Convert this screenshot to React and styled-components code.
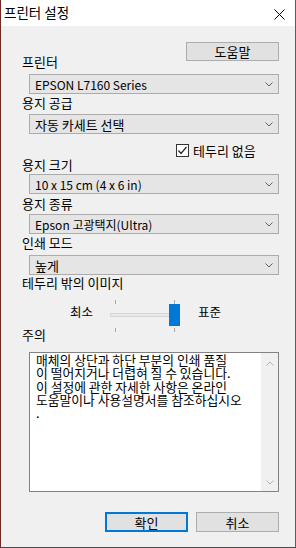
import React from "react";
import styled, { createGlobalStyle } from "styled-components";

const GlobalStyle = createGlobalStyle`
  html, body {
    margin: 0;
    padding: 0;
    background: #f0f0f0;
  }
  body {
    font-family: "Noto Sans CJK KR", "Noto Sans", sans-serif;
    font-size: 13px;
    color: #000;
  }
`;

const noteLines = [
  "매체의 상단과 하단 부분의 인쇄 품질",
  "이 떨어지거나 더렵혀 질 수 있습니다.",
  "이 설정에 관한 자세한 사항은 온라인",
  "도움말이나 사용설명서를 참조하십시오",
  ".",
];

function Chevron({ up }) {
  return (
    <svg width="8" height="5" viewBox="0 0 8 5">
      <polyline
        points={up ? "0.5,4.5 4,1 7.5,4.5" : "0.5,0.5 4,4 7.5,0.5"}
        fill="none"
        stroke="currentColor"
        strokeWidth="1"
      />
    </svg>
  );
}

function Select({ top, ko, children }) {
  return (
    <ComboStyled $top={top} $ko={ko}>
      <span>{children}</span>
      <Chevron />
    </ComboStyled>
  );
}

function App() {
  return (
    <>
      <GlobalStyle />
      <WindowStyled>
        <TitleBarStyled>
          <TitleStyled>프린터 설정</TitleStyled>
          <CloseStyled>
            <svg width="11" height="11" viewBox="0 0 11 11">
              <path d="M0.5 0.5 L10.5 10.5 M10.5 0.5 L0.5 10.5" stroke="#000" strokeWidth="1" />
            </svg>
          </CloseStyled>
        </TitleBarStyled>

        <BodyStyled>
          <TopRowStyled>
            <LabelStyled $top={13}>프린터</LabelStyled>
            <ButtonStyled $w={93} $h={19}>도움말</ButtonStyled>
          </TopRowStyled>
          <Select top={5}>EPSON L7160 Series</Select>

          <LabelStyled $top={2}>용지 공급</LabelStyled>
          <Select top={4} ko>자동 카세트 선택</Select>

          <CheckRowStyled>
            <CheckBoxStyled>
              <svg width="11" height="11" viewBox="0 0 11 11">
                <polyline points="1.5,5.5 4,8.5 9.5,2" fill="none" stroke="#222" strokeWidth="1.2" />
              </svg>
            </CheckBoxStyled>
            <span>테두리 없음</span>
          </CheckRowStyled>

          <LabelStyled $top={1}>용지 크기</LabelStyled>
          <Select top={2}>10 x 15 cm (4 x 6 in)</Select>

          <LabelStyled $top={3}>용지 종류</LabelStyled>
          <Select top={3}>Epson 고광택지(Ultra)</Select>

          <LabelStyled $top={2}>인쇄 모드</LabelStyled>
          <Select top={5} ko>높게</Select>

          <LabelStyled $top={1}>테두리 밖의 이미지</LabelStyled>
          <SliderRowStyled>
            <SliderTextStyled>최소</SliderTextStyled>
            <SliderStyled>
              <TickStyled $left={5} $top={1} />
              <TickStyled $left={64} $top={1} />
              <TrackStyled />
              <ThumbStyled />
              <TickStyled $left={5} $top={29} />
              <TickStyled $left={64} $top={29} />
            </SliderStyled>
            <SliderTextStyled>표준</SliderTextStyled>
          </SliderRowStyled>

          <LabelStyled $top={0}>주의</LabelStyled>
          <NoteStyled>
            <NoteTextStyled>
              {noteLines.map((line) => (
                <NoteLineStyled key={line}>{line}</NoteLineStyled>
              ))}
            </NoteTextStyled>
            <ScrollBarStyled>
              <Chevron up />
              <Chevron />
            </ScrollBarStyled>
          </NoteStyled>

          <FooterStyled>
            <ButtonStyled $w={83} $h={20} $primary>확인</ButtonStyled>
            <ButtonStyled $w={83} $h={20}>취소</ButtonStyled>
          </FooterStyled>
        </BodyStyled>
      </WindowStyled>
    </>
  );
}

const WindowStyled = styled.div`
  width: 296px;
  height: 548px;
  box-sizing: border-box;
  display: flex;
  flex-direction: column;
  background: #f0f0f0;
  border-left: 1px solid #6e2b25;
  border-right: 1px solid #5c5c5c;
  border-bottom: 1px solid #4a4a4a;
`;

const TitleBarStyled = styled.div`
  height: 26px;
  flex: none;
  background: #fff;
  display: flex;
  align-items: center;
  justify-content: space-between;
  padding: 0 10px 0 3px;
`;

const TitleStyled = styled.span`
  font-size: 13.5px;
  line-height: 14px;
  margin-top: -2px;
`;

const CloseStyled = styled.span`
  display: flex;
  margin-top: 3px;
`;

const BodyStyled = styled.div`
  flex: 1;
  display: flex;
  flex-direction: column;
  padding: 16px 16px 0 21px;
`;

const TopRowStyled = styled.div`
  display: flex;
  justify-content: space-between;
  align-items: flex-start;
`;

const LabelStyled = styled.div`
  margin-top: ${(p) => p.$top}px;
  height: 14px;
  line-height: 14px;
  font-size: 13px;
  white-space: nowrap;
`;

const ComboStyled = styled.div`
  margin-top: ${(p) => p.$top}px;
  margin-left: 7px;
  height: 20px;
  box-sizing: border-box;
  display: flex;
  align-items: center;
  justify-content: space-between;
  padding: 0 5px 0 5px;
  background: #e5e5e5;
  border: 1px solid #acacac;
  color: #000;
  font-size: ${(p) => (p.$ko ? 13 : 12)}px;
  white-space: nowrap;

  svg {
    color: #606060;
  }
`;

const ButtonStyled = styled.div`
  width: ${(p) => p.$w}px;
  height: ${(p) => p.$h}px;
  box-sizing: border-box;
  display: flex;
  align-items: center;
  justify-content: center;
  background: #e1e1e1;
  border: ${(p) => (p.$primary ? "2px solid #0078d7" : "1px solid #adadad")};
  font-size: 13px;
`;

const CheckRowStyled = styled.div`
  margin-top: 9px;
  margin-left: 154px;
  height: 14px;
  display: flex;
  align-items: center;
  gap: 4px;
  font-size: 13px;
`;

const CheckBoxStyled = styled.span`
  width: 13px;
  height: 13px;
  box-sizing: border-box;
  border: 1px solid #333;
  background: #fff;
  display: flex;
  align-items: center;
  justify-content: center;
`;

const SliderRowStyled = styled.div`
  margin-top: 9px;
  height: 29px;
  display: flex;
  align-items: flex-start;
  padding-left: 48px;
`;

const SliderTextStyled = styled.span`
  margin-top: 6px;
  line-height: 14px;
  font-size: 12.5px;
`;

const SliderStyled = styled.div`
  position: relative;
  width: 70px;
  height: 29px;
  margin: 0 18px 0 17px;
`;

const TrackStyled = styled.div`
  position: absolute;
  left: 0;
  top: 14px;
  width: 70px;
  height: 4px;
  box-sizing: border-box;
  background: #e7eaea;
  border: 1px solid #d6d6d6;
`;

const ThumbStyled = styled.div`
  position: absolute;
  left: 59px;
  top: 5px;
  width: 11px;
  height: 22px;
  background: #0078d7;
`;

const TickStyled = styled.div`
  position: absolute;
  left: ${(p) => p.$left}px;
  top: ${(p) => p.$top}px;
  width: 1px;
  height: 4px;
  background: #a8a8a8;
`;

const NoteStyled = styled.div`
  margin-top: 10px;
  margin-left: 7px;
  height: 140px;
  box-sizing: border-box;
  border: 1px solid #828282;
  background: #fff;
  display: flex;
`;

const NoteTextStyled = styled.div`
  flex: 1;
  padding: 0 0 0 6px;
  font-size: 12.8px;
  white-space: nowrap;
  overflow: hidden;
`;

const NoteLineStyled = styled.div`
  height: 13.25px;
  line-height: 13.25px;
`;

const ScrollBarStyled = styled.div`
  width: 17px;
  background: #f0f0f0;
  display: flex;
  flex-direction: column;
  justify-content: space-between;
  align-items: center;
  padding: 8px 0 6px;
  color: #b0b0b0;
`;

const FooterStyled = styled.div`
  margin-top: 20px;
  display: flex;
  justify-content: flex-end;
  gap: 8px;
`;

export default App;
